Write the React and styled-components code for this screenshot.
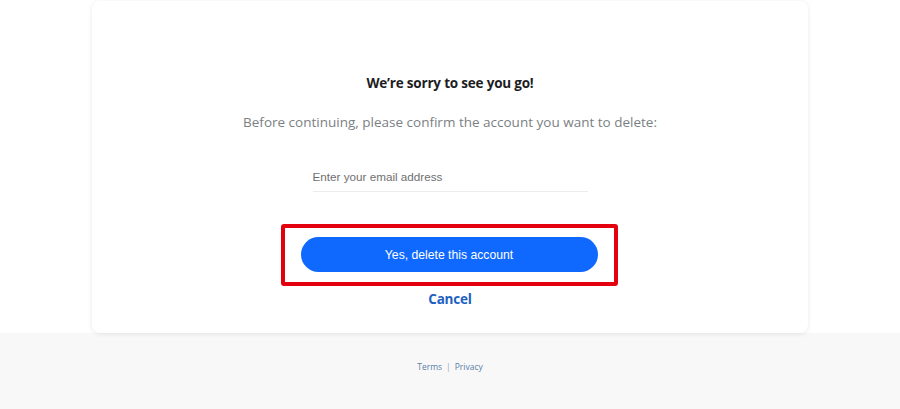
import React from "react";
import styled, { createGlobalStyle } from "styled-components";

const Global = createGlobalStyle`
  html, body { margin: 0; padding: 0; }
  body { background: #f8f8f8; font-family: "Open Sans", "Liberation Sans", sans-serif; }
`;

const Page = styled.div`
  display: flex;
  flex-direction: column;
  min-height: 409px;
`;

const Main = styled.main`
  background: #ffffff;
  display: flex;
  justify-content: center;
  padding-top: 1px;
`;

const Card = styled.section`
  width: 716px;
  height: 332px;
  box-sizing: border-box;
  background: #fff;
  border-radius: 8px;
  box-shadow: 0 1px 5px rgba(0, 0, 0, 0.09);
  display: flex;
  flex-direction: column;
  align-items: center;
  padding-top: 72px;
`;

const Title = styled.h1`
  margin: 0;
  font-family: "Open Sans", sans-serif;
  font-size: 13.5px;
  font-weight: 700;
  line-height: 20px;
  color: #1d1d1f;
  letter-spacing: -0.2px;
`;

const Subtitle = styled.p`
  margin: 18px 0 0;
  font-family: "Open Sans", sans-serif;
  font-size: 13.5px;
  line-height: 22px;
  color: #7b7f84;
`;

const EmailInput = styled.input`
  margin-top: 35px;
  width: 275px;
  box-sizing: border-box;
  border: none;
  border-bottom: 1px solid #ececec;
  outline: none;
  padding: 0 0 5px;
  font-family: "Liberation Sans", Arial, sans-serif;
  font-size: 11.7px;
  line-height: 18px;
  color: #333;
  background: transparent;
  &::placeholder { color: #6f6f6f; }
`;

const Highlight = styled.div`
  margin-top: 32px;
  margin-right: 2px;
  border: 4px solid #e3000f;
  border-radius: 3px;
  padding: 9px 16px 10px 16px;
  display: flex;
`;

const PrimaryButton = styled.button`
  width: 297px;
  height: 35px;
  border: none;
  border-radius: 18px;
  background: #0f69ff;
  color: #fff;
  font-family: "Liberation Sans", Arial, sans-serif;
  font-size: 12.2px;
  cursor: pointer;
`;

const CancelLink = styled.a`
  margin-top: 3px;
  font-family: "Open Sans", sans-serif;
  font-size: 13.5px;
  font-weight: 700;
  color: #1e5fc1;
  text-decoration: none;
  line-height: 20px;
  letter-spacing: -0.2px;
`;

const Footer = styled.footer`
  flex: 1;
  display: flex;
  justify-content: center;
  padding-top: 28px;
  gap: 4px;
  font-family: "Open Sans", sans-serif;
  font-size: 8.5px;
  color: #6f8cae;
`;

const FooterLink = styled.a`
  color: #5b7fa8;
  text-decoration: none;
`;

const Sep = styled.span`
  color: #9aa7b5;
`;

export default function App() {
  return (
    <Page>
      <Global />
      <Main>
        <Card>
          <Title>We’re sorry to see you go!</Title>
          <Subtitle>Before continuing, please confirm the account you want to delete:</Subtitle>
          <EmailInput placeholder="Enter your email address" />
          <Highlight>
            <PrimaryButton>Yes, delete this account</PrimaryButton>
          </Highlight>
          <CancelLink href="#">Cancel</CancelLink>
        </Card>
      </Main>
      <Footer>
        <FooterLink href="#">Terms</FooterLink>
        <Sep>|</Sep>
        <FooterLink href="#">Privacy</FooterLink>
      </Footer>
    </Page>
  );
}
